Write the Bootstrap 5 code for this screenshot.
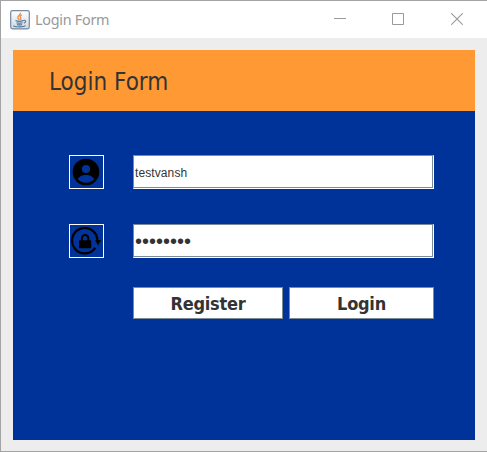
<!DOCTYPE html>
<html lang="en">
<head>
<meta charset="utf-8">
<meta name="viewport" content="width=device-width, initial-scale=1">
<title>Login Form</title>
<link href="https://cdn.jsdelivr.net/npm/bootstrap@5.3.0/dist/css/bootstrap.min.css" rel="stylesheet">
<style>
  body { background: #ededed; overflow: hidden; }
  .app-window { height: 452px; border: solid #a3a3a3; border-width: 1px 0 1px 1px; background: #ededed; }
  .title-bar { height: 37px; padding-left: 9px; font: 15px/37px "Noto Sans", sans-serif; color: #999; }
  .title-text { margin-left: 5px; font-size: 14.4px; letter-spacing: -.28px; }
  .win-controls { gap: 46px; padding: 0 24px 1px 0; }
  .win-controls svg:last-child { margin-left: 1px; }
  .panel { margin: 12px 12px 11px; height: 390px; background: #003399; }
  .panel-head { height: 61px; padding-left: 36px; background: #ff9933; color: #333; font: 24px/65px "DejaVu Sans Condensed", "DejaVu Sans", sans-serif; font-stretch: condensed; }
  .form-area { padding: 44px 41px 0 56px; }
  .form-line { height: 34px; gap: 29px; margin-bottom: 35px; }
  .icon-box { width: 35px; height: 34px; border: 1px solid #fff; }
  .swing-field { border: 1px solid #7a8a99; border-right-color: #fff; border-bottom-color: #fff; box-shadow: inset -1px -1px #7a8a99; background: #fff; }
  .swing-field .form-control { height: 32px; padding: 2px 1px 0; font: 12px "Liberation Sans", Arial, sans-serif; letter-spacing: .1px; color: #333; background: transparent; }
  .swing-field .form-control.secret { padding-top: 0; font-size: 20px; letter-spacing: 0; }
  .actions { margin: -6px 0 0 64px; gap: 6px; height: 32px; }
  .actions .btn { border: 1px solid #7a8a99; background: #fff; color: #333; font: bold 18px/32px "DejaVu Sans Condensed", "DejaVu Sans", sans-serif; font-stretch: condensed; letter-spacing: -.25px; }
  .btn-register { width: 150px; }
  .btn-login { width: 145px; }
</style>
</head>
<body>
<div class="app-window">
  <header class="title-bar d-flex align-items-center bg-white">
    <svg width="20" height="20" viewBox="0 0 20 20" class="flex-shrink-0">
      <defs><linearGradient id="tile" x2="0" y2="1"><stop stop-color="#fff"/><stop offset="1" stop-color="#cfd8df"/></linearGradient></defs>
      <rect x=".7" y=".7" width="18.6" height="18.2" rx="1.8" fill="url(#tile)" stroke="#7689a0" stroke-width="1.2"/>
      <path d="M10.3 2.7c1 2-3.3 3-2.4 5.2.3.8 1 1.300 1.500 2M11.800 4.800c-2.500 1.300-1.500 2.300-1 3.200.4.7 0 1.300-.5 1.900" fill="none" stroke="#ee8b42" stroke-width="1.300"/>
      <path d="M5.500 10.500c2 .9 6 .8 8 0M6.500 12.700c2 .7 4 .7 6 0M7 14.400c1.500.6 3.500.6 5 0M3.800 15.500c-1 1.600 9.500 1.900 11.800.1M13.500 10.500c3-.9 2.700 1.900.3 2.600" fill="none" stroke="#54799c" stroke-width="1.100"/>
    </svg>
    <span class="title-text">Login Form</span>
    <div class="win-controls d-flex ms-auto">
      <svg width="12" height="12" viewBox="0 0 12 12"><path d="M0 5.500h12" stroke="#999"/></svg>
      <svg width="12" height="12" viewBox="0 0 12 12"><path d="M.5.500h11v11H.5z" fill="none" stroke="#999"/></svg>
      <svg width="12" height="12" viewBox="0 0 12 12"><path d="M.2.200l11.600 11.600M11.800.200L.2 11.800" stroke="#999" stroke-width="1.100"/></svg>
    </div>
  </header>
  <main class="panel">
    <h1 class="panel-head m-0">Login Form</h1>
    <form class="form-area">
      <div class="form-line d-flex">
        <span class="icon-box flex-shrink-0 d-flex">
          <svg width="33" height="32" viewBox="0 0 33 32"><circle cx="16" cy="16" r="13.300"/><circle cx="16" cy="13" r="4.100" fill="#039"/><path d="M7.800 23.300c2.100-5.800 14.300-5.800 16.400 0-3.800 4.600-12.600 4.600-16.400 0z" fill="#039"/></svg>
        </span>
        <div class="swing-field flex-grow-1"><input class="form-control border-0 rounded-0" type="text" value="testvansh" aria-label="Username"></div>
      </div>
      <div class="form-line d-flex">
        <span class="icon-box flex-shrink-0 d-flex">
          <svg width="33" height="32" viewBox="0 0 33 32"><path d="M25.400 22.600A12.700 12.700 0 1 1 27.400 15" fill="none" stroke="#000" stroke-width="2.200"/><path d="M25 15h6l-2.800 5.500z"/><rect x="9" y="15.300" width="12.200" height="8" rx=".8"/><path d="M11.900 16v-2.700a3.200 3.200 0 0 1 6.400 0V16" fill="none" stroke="#000" stroke-width="2"/></svg>
        </span>
        <div class="swing-field flex-grow-1"><input class="form-control secret border-0 rounded-0" type="password" value="password" aria-label="Password"></div>
      </div>
      <div class="actions d-flex">
        <button type="button" class="btn btn-register rounded-0 p-0">Register</button>
        <button type="button" class="btn btn-login rounded-0 p-0">Login</button>
      </div>
    </form>
  </main>
</div>
<script src="https://cdn.jsdelivr.net/npm/bootstrap@5.3.0/dist/js/bootstrap.bundle.min.js"></script>
</body>
</html>
